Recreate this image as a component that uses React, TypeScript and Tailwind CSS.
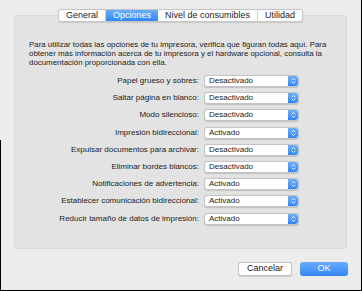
import React from "react";

const font = { fontFamily: '"Liberation Sans", Arial, sans-serif' };

const tabs = ["General", "Opciones", "Nivel de consumibles", "Utilidad"];

const rows: [string, string][] = [
  ["Papel grueso y sobres:", "Desactivado"],
  ["Saltar página en blanco:", "Desactivado"],
  ["Modo silencioso:", "Desactivado"],
  ["Impresión bidireccional:", "Activado"],
  ["Expulsar documentos para archivar:", "Desactivado"],
  ["Eliminar bordes blancos:", "Desactivado"],
  ["Notificaciones de advertencia:", "Activado"],
  ["Establecer comunicación bidireccional:", "Activado"],
  ["Reducir tamaño de datos de impresión:", "Activado"],
];

const Stepper = () => (
  <div className="flex h-full w-[10px] items-center justify-center rounded-r-[3px] bg-gradient-to-b from-[#6cb0fa] to-[#2f86f6]">
    <svg width="5" height="8" viewBox="0 0 5 8" fill="none">
      <path d="M1 3 L2.5 1.5 L4 3" stroke="white" strokeWidth="0.9" strokeLinecap="round" strokeLinejoin="round" />
      <path d="M1 5 L2.5 6.5 L4 5" stroke="white" strokeWidth="0.9" strokeLinecap="round" strokeLinejoin="round" />
    </svg>
  </div>
);

const Select = ({ value }: { value: string }) => (
  <div className="flex h-full w-[95px] items-stretch rounded-[3px] border border-[#c4c4c4] bg-white shadow-[0_0.5px_1px_rgba(0,0,0,0.15)]">
    <div className="flex flex-1 items-center pl-[4px] text-[8px] text-[#222]">{value}</div>
    <Stepper />
  </div>
);

export default function App() {
  return (
    <div
      className="relative flex h-[291px] w-[362px] flex-col border-r border-b border-black bg-[#ececec] pt-[9px]"
      style={font}
    >
      <div className="absolute bottom-0 left-0 top-[140px] w-px bg-black" />

      {/* tabs */}
      <div className="relative z-10 flex justify-center">
        <div className="flex h-[13px] overflow-hidden rounded-[3px] border border-[#c6c6c6] bg-white shadow-[0_0.5px_1px_rgba(0,0,0,0.12)]">
          {tabs.map((t, i) => (
            <div
              key={t}
              className={
                i === 1
                  ? "flex items-center bg-gradient-to-b from-[#6aaefa] to-[#2f87f7] px-[7px] text-[9px] text-white"
                  : "flex items-center border-r border-[#d0d0d0] px-[7px] text-[9px] text-[#222] last:border-r-0"
              }
            >
              {t}
            </div>
          ))}
        </div>
      </div>

      {/* panel */}
      <div className="-mt-[7px] ml-[14px] h-[234px] w-[333px] rounded-[3px] border border-[#dadada] bg-[#e3e3e3] px-[14px] pt-[24px]">
        <p className="text-[7.9px] leading-[9px] text-[#222]">
          Para utilizar todas las opciones de tu impresora, verifica que figuran todas aquí. Para
          <br />
          obtener más información acerca de tu impresora y el hardware opcional, consulta la
          <br />
          documentación proporcionada con ella.
        </p>

        <div className="mt-[8px] flex flex-col gap-[5.2px]">
          {rows.map(([label, value]) => (
            <div key={label} className="flex h-[12px] items-center">
              <div className="w-[175px] pr-[5px] text-right text-[8px] text-[#222]">{label}</div>
              <div className="h-full">
                <Select value={value} />
              </div>
            </div>
          ))}
        </div>
      </div>

      {/* buttons */}
      <div className="mt-[13px] flex justify-end gap-[8px] pr-[13px]">
        <div className="flex h-[14px] w-[54px] items-center justify-center rounded-[3px] border border-[#c4c4c4] bg-white text-[9px] text-[#222] shadow-[0_0.5px_1px_rgba(0,0,0,0.15)]">
          Cancelar
        </div>
        <div className="flex h-[14px] w-[48px] items-center justify-center rounded-[3px] bg-gradient-to-b from-[#67abf9] to-[#3587f6] text-[9px] text-white">
          OK
        </div>
      </div>
    </div>
  );
}
